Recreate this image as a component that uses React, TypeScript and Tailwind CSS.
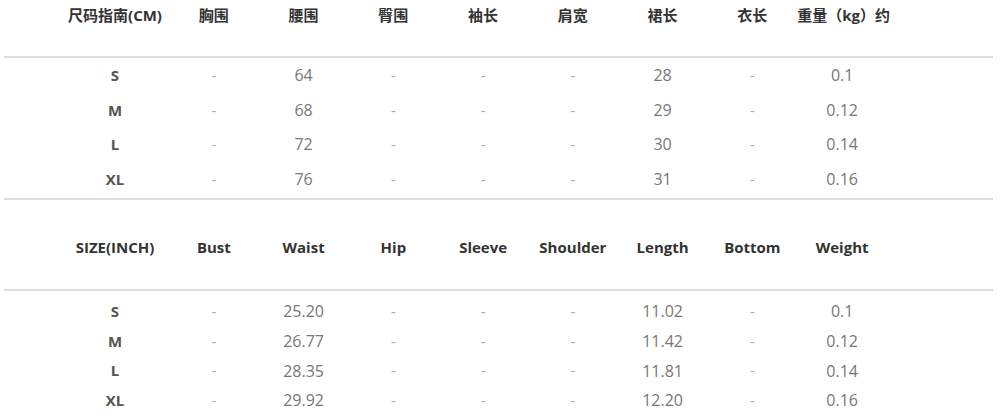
const font = { fontFamily: '"Open Sans", "Noto Sans CJK SC", sans-serif' };

const cmHead = ['尺码指南(CM)', '胸围', '腰围', '臀围', '袖长', '肩宽', '裙长', '衣长', '重量（kg）约'];
const inHead = ['SIZE(INCH)', 'Bust', 'Waist', 'Hip', 'Sleeve', 'Shoulder', 'Length', 'Bottom', 'Weight'];

const cmRows = [
  ['S', '-', '64', '-', '-', '-', '28', '-', '0.1'],
  ['M', '-', '68', '-', '-', '-', '29', '-', '0.12'],
  ['L', '-', '72', '-', '-', '-', '30', '-', '0.14'],
  ['XL', '-', '76', '-', '-', '-', '31', '-', '0.16'],
];

const inRows = [
  ['S', '-', '25.20', '-', '-', '-', '11.02', '-', '0.1'],
  ['M', '-', '26.77', '-', '-', '-', '11.42', '-', '0.12'],
  ['L', '-', '28.35', '-', '-', '-', '11.81', '-', '0.14'],
  ['XL', '-', '29.92', '-', '-', '-', '12.20', '-', '0.16'],
];

const grid = 'grid grid-cols-[108px_repeat(8,89.75px)] pl-[57px]';

function HeadRow({ cells, className }: { cells: string[]; className: string }) {
  return (
    <div className={`${grid} items-center ${className}`}>
      {cells.map((c, i) => (
        <div key={i} className="whitespace-nowrap text-center text-[15px] font-bold text-[#333]">
          {c}
        </div>
      ))}
    </div>
  );
}

function DataRow({ cells, h }: { cells: string[]; h: string }) {
  return (
    <div className={`${grid} items-center ${h}`}>
      {cells.map((c, i) => (
        <div
          key={i}
          className={
            i === 0
              ? 'text-center text-[15px] font-bold text-[#555]'
              : c === '-'
                ? 'text-center text-[15px] text-[#aaa]'
                : 'text-center text-[16px] text-[#777]'
          }
        >
          {c}
        </div>
      ))}
    </div>
  );
}

export default function App() {
  return (
    <div className="h-[416px] w-[1000px] overflow-hidden bg-white" style={font}>
      <div className="ml-[4px] w-[989px]">
        <HeadRow cells={cmHead} className="h-[30px]" />
        <div className="mt-[26px] h-[2px] bg-[#dcdcdc]" />
        <div>
          {cmRows.map((r, i) => (
            <DataRow key={i} cells={r} h="h-[34.6px]" />
          ))}
        </div>
        <div className="mt-[2px] h-[2px] bg-[#dcdcdc]" />
        <HeadRow cells={inHead} className="mt-[34px] h-[26px]" />
        <div className="mt-[29px] h-[2px] bg-[#dcdcdc]" />
        <div className="pt-[5px]">
          {inRows.map((r, i) => (
            <DataRow key={i} cells={r} h="h-[29.7px]" />
          ))}
        </div>
      </div>
    </div>
  );
}
